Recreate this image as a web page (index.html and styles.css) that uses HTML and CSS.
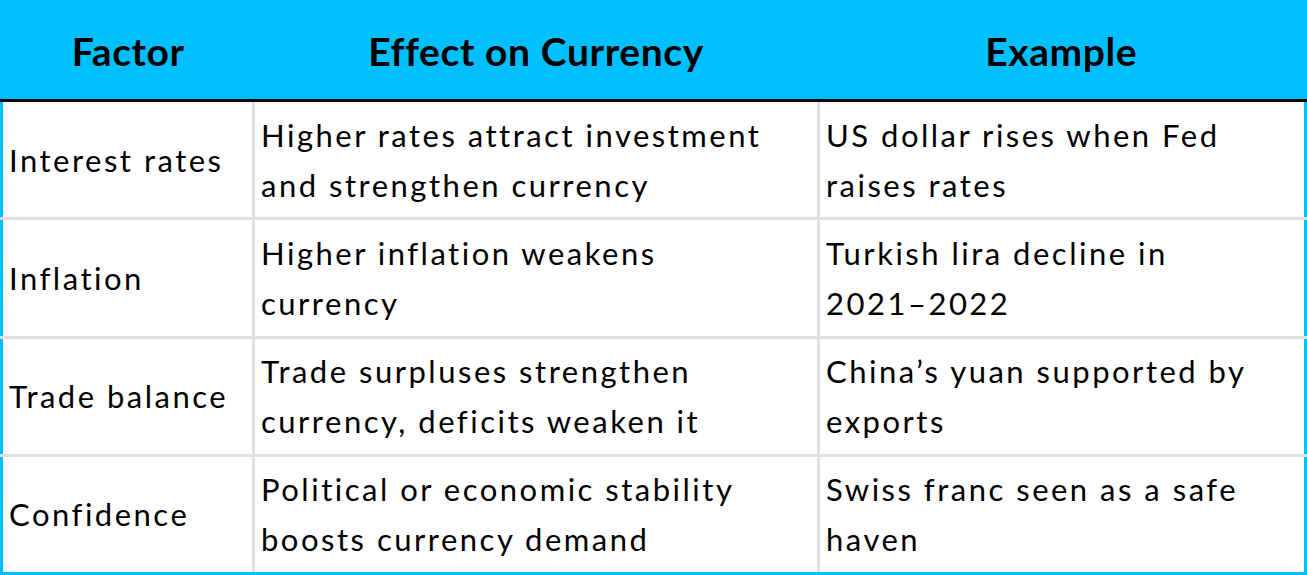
FILE: index.html
```html
<!DOCTYPE html>
<html>
<head>
<meta charset="utf-8">
<link rel="stylesheet" href="styles.css">
</head>
<body>
<table class="fx">
  <colgroup>
    <col class="c1"><col class="c2"><col class="c3">
  </colgroup>
  <thead>
    <tr><th>Factor</th><th>Effect on Currency</th><th>Example</th></tr>
  </thead>
  <tbody>
    <tr><td>Interest rates</td><td>Higher rates attract investment<br>and strengthen currency</td><td>US dollar rises when Fed<br>raises rates</td></tr>
    <tr><td>Inflation</td><td>Higher inflation weakens<br>currency</td><td>Turkish lira decline in<br>2021–2022</td></tr>
    <tr><td>Trade balance</td><td>Trade surpluses strengthen<br>currency, deficits weaken it</td><td>China’s yuan supported by<br>exports</td></tr>
    <tr><td>Confidence</td><td>Political or economic stability<br>boosts currency demand</td><td>Swiss franc seen as a safe<br>haven</td></tr>
  </tbody>
</table>
</body>
</html>
```
FILE: styles.css
```css
html, body { margin: 0; padding: 0; background: #fff; }
.fx {
  width: 1307px;
  height: 575px;
  border-collapse: collapse;
  table-layout: fixed;
  border: 3px solid #00bfff;
  font-family: "Lato", "Open Sans", sans-serif;
  color: #000;
}
.c1 { width: 252px; }
.c2 { width: 565px; }
.c3 { width: auto; }
.fx th {
  background: #00bfff;
  height: 96px;
  font-size: 39px;
  font-weight: 700;
  letter-spacing: 0.6px;
  text-align: center;
  border-bottom: 3px solid #000;
  padding: 0;
}
.fx td {
  font-size: 31px;
  line-height: 50px;
  letter-spacing: 2.5px;
  padding: 0 6px;
  border: 3px solid #e0e0e0;
  vertical-align: middle;
  height: 112px;
}
.fx tr td:first-child { border-left: 3px solid #00bfff; }
.fx tr td:last-child { border-right: 3px solid #00bfff; }
.fx tbody tr:last-child td { border-bottom: 3px solid #00bfff; }
```
